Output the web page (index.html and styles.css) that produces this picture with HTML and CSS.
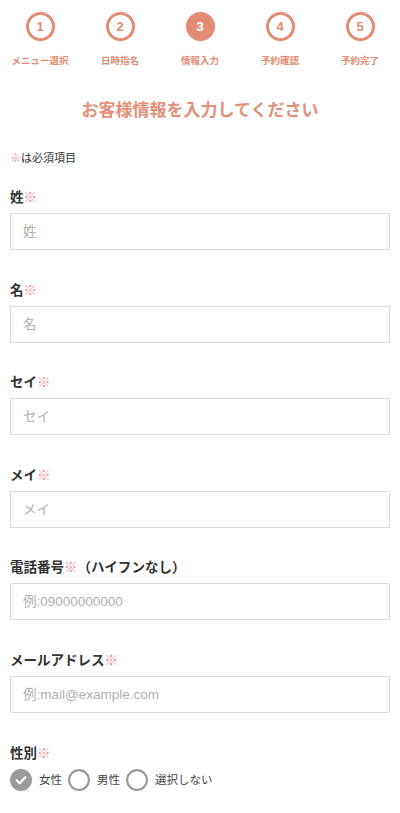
FILE: index.html
```html
<!DOCTYPE html>
<html lang="ja">
<head>
<meta charset="utf-8">
<meta name="viewport" content="width=device-width, initial-scale=1">
<title>お客様情報入力</title>
<link rel="stylesheet" href="styles.css">
</head>
<body>
<div class="page">
  <ol class="steps">
    <li class="step"><span class="step-num">1</span><span class="step-label">メニュー選択</span></li>
    <li class="step"><span class="step-num">2</span><span class="step-label">日時指名</span></li>
    <li class="step is-current"><span class="step-num">3</span><span class="step-label">情報入力</span></li>
    <li class="step"><span class="step-num">4</span><span class="step-label">予約確認</span></li>
    <li class="step"><span class="step-num">5</span><span class="step-label">予約完了</span></li>
  </ol>

  <h1 class="title">お客様情報を入力してください</h1>

  <p class="note"><span class="req">※</span>は必須項目</p>

  <form class="form">
    <div class="field">
      <label class="label">姓<span class="req">※</span></label>
      <input class="input" type="text" placeholder="姓">
    </div>
    <div class="field">
      <label class="label">名<span class="req">※</span></label>
      <input class="input" type="text" placeholder="名">
    </div>
    <div class="field">
      <label class="label">セイ<span class="req">※</span></label>
      <input class="input" type="text" placeholder="セイ">
    </div>
    <div class="field">
      <label class="label">メイ<span class="req">※</span></label>
      <input class="input" type="text" placeholder="メイ">
    </div>
    <div class="field">
      <label class="label">電話番号<span class="req">※</span>（ハイフンなし）</label>
      <input class="input" type="tel" placeholder="例:09000000000">
    </div>
    <div class="field">
      <label class="label">メールアドレス<span class="req">※</span></label>
      <input class="input" type="email" placeholder="例:mail@example.com">
    </div>
    <div class="field">
      <label class="label">性別<span class="req">※</span></label>
      <div class="radios">
        <label class="radio is-checked">
          <span class="radio-mark"><svg viewBox="0 0 20 20" width="20" height="20"><circle cx="10" cy="10" r="10" fill="#9a9a9a"/><path d="M6 10.3 L8.8 13 L14 7.5" fill="none" stroke="#fff" stroke-width="2" stroke-linecap="round" stroke-linejoin="round"/></svg></span>
          <span class="radio-text">女性</span>
        </label>
        <label class="radio">
          <span class="radio-mark"><svg viewBox="0 0 20 20" width="20" height="20"><circle cx="10" cy="10" r="9" fill="#fff" stroke="#9a9a9a" stroke-width="2"/></svg></span>
          <span class="radio-text">男性</span>
        </label>
        <label class="radio">
          <span class="radio-mark"><svg viewBox="0 0 20 20" width="20" height="20"><circle cx="10" cy="10" r="9" fill="#fff" stroke="#9a9a9a" stroke-width="2"/></svg></span>
          <span class="radio-text">選択しない</span>
        </label>
      </div>
    </div>
  </form>
</div>
</body>
</html>
```

FILE: styles.css
```css
* { box-sizing: border-box; }

body {
  margin: 0;
  background: #fff;
  color: #333;
  font-family: "Liberation Sans", "Noto Sans CJK JP", sans-serif;
}

.page {
  width: 400px;
}

.steps {
  list-style: none;
  margin: 0;
  padding: 12px 0 0;
  display: grid;
  grid-template-columns: repeat(5, 1fr);
}

.step {
  display: flex;
  flex-direction: column;
  align-items: center;
}

.step-num {
  width: 29px;
  height: 29px;
  border: 3px solid #e28c73;
  border-radius: 50%;
  display: flex;
  align-items: center;
  justify-content: center;
  color: #e28c73;
  font-size: 13px;
  font-weight: bold;
  line-height: 1;
}

.step.is-current .step-num {
  background: #e28c73;
  color: #fff;
}

.step-label {
  margin-top: 13px;
  font-size: 9.5px;
  line-height: 14px;
  color: #e28c73;
  font-weight: bold;
}

.title {
  margin: 31px 0 0;
  text-align: center;
  font-size: 17px;
  line-height: 24px;
  font-weight: bold;
  color: #e3917a;
}

.note {
  margin: 27px 0 0;
  padding-left: 10px;
  font-size: 11px;
  line-height: 16px;
  color: #333;
}

.req {
  color: #eb8f97;
  font-weight: normal;
}

.form {
  margin: 0;
  padding: 22px 10px 0;
}

.field {
  margin-bottom: 30.6px;
}

.label {
  display: block;
  font-size: 13.5px;
  line-height: 20px;
  font-weight: bold;
  color: #333;
}

.input {
  display: block;
  width: 100%;
  height: 37px;
  margin-top: 5px;
  padding: 0 12px;
  border: 1px solid #dcdcdc;
  border-radius: 0;
  background: #fff;
  font-family: "Liberation Sans", "Noto Sans CJK JP", sans-serif;
  font-size: 13.5px;
  color: #333;
  outline: none;
}

.input::placeholder {
  color: #b0b0b0;
}

.radios {
  display: flex;
  align-items: center;
  gap: 6px;
  margin-top: 5px;
}

.radio {
  display: flex;
  align-items: center;
  gap: 7px;
}

.radio-mark {
  display: flex;
  width: 22px;
  height: 22px;
  align-items: center;
  justify-content: center;
}

.radio-mark svg {
  width: 22px;
  height: 22px;
}

.radio-text {
  font-size: 11.5px;
  line-height: 16px;
  color: #444;
}
```
